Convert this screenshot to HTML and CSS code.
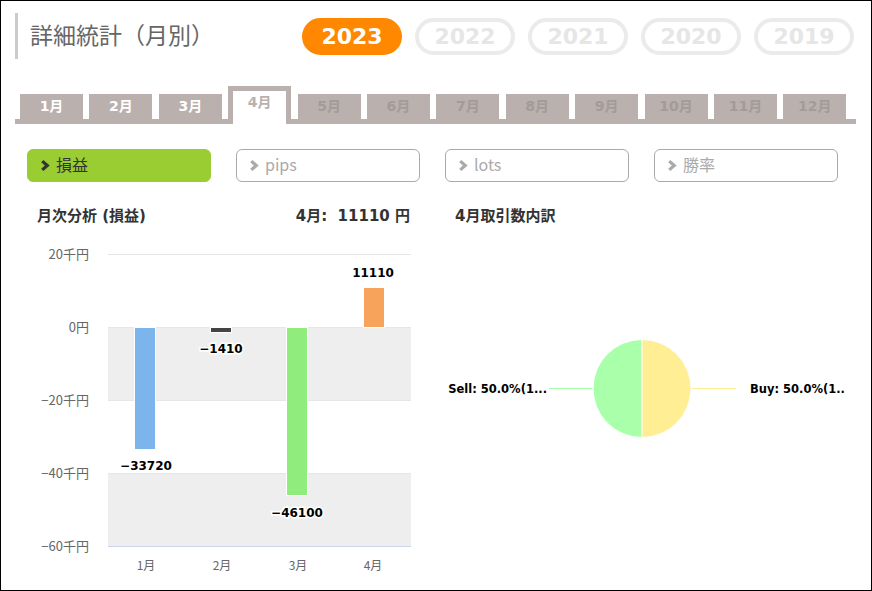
FILE: index.html
```html
<!DOCTYPE html>
<html lang="ja">
<head>
    <meta charset="UTF-8">
    <title>詳細統計（月別）</title>
    <link rel="stylesheet" href="styles.css">
</head>
<body>
<div class="page">
    <div class="header">
        <h1 class="title">詳細統計（月別）</h1>
        <div class="years">
            <span class="year active">2023</span>
            <span class="year">2022</span>
            <span class="year">2021</span>
            <span class="year">2020</span>
            <span class="year">2019</span>
        </div>
    </div>

    <ul class="months">
        <li class="done">1月</li>
        <li class="done">2月</li>
        <li class="done">3月</li>
        <li class="current">4月</li>
        <li>5月</li>
        <li>6月</li>
        <li>7月</li>
        <li>8月</li>
        <li>9月</li>
        <li>10月</li>
        <li>11月</li>
        <li>12月</li>
    </ul>

    <div class="modes">
        <div class="mode selected"><svg class="chev" viewBox="0 0 8 10"><polyline points="1.8,1.5 5.8,5 1.8,8.5"/></svg>損益</div>
        <div class="mode"><svg class="chev" viewBox="0 0 8 10"><polyline points="1.8,1.5 5.8,5 1.8,8.5"/></svg>pips</div>
        <div class="mode"><svg class="chev" viewBox="0 0 8 10"><polyline points="1.8,1.5 5.8,5 1.8,8.5"/></svg>lots</div>
        <div class="mode"><svg class="chev" viewBox="0 0 8 10"><polyline points="1.8,1.5 5.8,5 1.8,8.5"/></svg>勝率</div>
    </div>

    <div class="charts">
        <div class="panel monthly">
            <div class="panel-head">
                <span>月次分析 (損益)</span>
                <span>4月:&nbsp; 11110 円</span>
            </div>
            <svg class="plot" width="393" height="345" viewBox="0 0 393 345">
                <rect x="81" y="89" width="303" height="73" fill="#eeeeee"/>
                <rect x="81" y="235" width="303" height="73" fill="#eeeeee"/>
                <g stroke="#e6e6e6" stroke-width="1">
                    <line x1="81" y1="16.5" x2="384" y2="16.5"/>
                    <line x1="81" y1="89.5" x2="384" y2="89.5"/>
                    <line x1="81" y1="162.5" x2="384" y2="162.5"/>
                    <line x1="81" y1="235.5" x2="384" y2="235.5"/>
                </g>
                <line x1="81" y1="308.5" x2="384" y2="308.5" stroke="#ccd6eb"/>

                <g class="axis-y">
                    <text x="62" y="21">20千円</text>
                    <text x="62" y="94">0円</text>
                    <text x="62" y="167">−20千円</text>
                    <text x="62" y="240">−40千円</text>
                    <text x="62" y="313">−60千円</text>
                </g>

                <g stroke="#ffffff" stroke-width="1">
                    <rect x="107.5" y="89.5" width="21" height="122" fill="#7cb5ec"/>
                    <rect x="183.5" y="89.5" width="21" height="5" fill="#434348"/>
                    <rect x="259.5" y="89.5" width="21" height="168" fill="#90ed7d"/>
                    <rect x="336.5" y="49.5" width="21" height="40" fill="#f7a35c"/>
                </g>

                <g class="value">
                    <text x="119" y="232">−33720</text>
                    <text x="194" y="115">−1410</text>
                    <text x="270" y="279">−46100</text>
                    <text x="346" y="39">11110</text>
                </g>

                <g class="axis-x">
                    <text x="119" y="332">1月</text>
                    <text x="195" y="332">2月</text>
                    <text x="271" y="332">3月</text>
                    <text x="346" y="332">4月</text>
                </g>
            </svg>
        </div>

        <div class="panel breakdown">
            <div class="panel-head">
                <span>4月取引数内訳</span>
            </div>
            <svg class="plot" width="405" height="345" viewBox="0 0 405 345">
                <line x1="104" y1="150.5" x2="148" y2="150.5" stroke="#aaffaa"/>
                <line x1="247" y1="150.5" x2="291" y2="150.5" stroke="#ffee93"/>
                <path d="M197,101.5 A49,49 0 0 0 197,199.5 Z" fill="#aaffaa" stroke="#ffffff"/>
                <path d="M197,101.5 A49,49 0 0 1 197,199.5 Z" fill="#ffee93" stroke="#ffffff"/>
                <g class="slice">
                    <text x="102" y="155" text-anchor="end">Sell: 50.0%(1...</text>
                    <text x="305" y="155">Buy: 50.0%(1..</text>
                </g>
            </svg>
        </div>
    </div>
</div>
</body>
</html>
```

FILE: styles.css
```css
* {
    box-sizing: border-box;
}

body {
    margin: 0;
    font-family: "DejaVu Sans", "Noto Sans CJK JP", sans-serif;
    color: #333;
}

.page {
    width: 872px;
    height: 591px;
    border: 1px solid #000;
    padding: 12px 0 0 14px;
    overflow: hidden;
}

.header {
    display: flex;
    align-items: center;
    height: 46px;
}

.title {
    margin: 0;
    height: 46px;
    border-left: 3px solid #cccccc;
    padding: 6px 0 0 12px;
    font-family: "Noto Sans CJK JP", sans-serif;
    font-weight: normal;
    font-size: 23px;
    line-height: 30px;
    color: #666;
}

.years {
    display: flex;
    gap: 13px;
    margin-left: 88px;
}

.year {
    width: 100px;
    height: 37px;
    border: 4px solid #ebebeb;
    border-radius: 19px;
    text-align: center;
    font-weight: bold;
    font-size: 22px;
    line-height: 29px;
    color: #e6e6e6;
}

.year.active {
    background: #ff8800;
    border-color: #ff8800;
    color: #fff;
}

.months {
    display: flex;
    align-items: flex-end;
    gap: 6.4px;
    width: 836px;
    height: 38px;
    margin: 22px 0 0 0;
    padding: 0 0 0 5px;
    list-style: none;
    border-bottom: 5px solid #bab0ae;
    box-sizing: content-box;
}

.months li {
    width: 63px;
    height: 25px;
    background: #bab0ae;
    text-align: center;
    font-weight: bold;
    font-size: 14px;
    line-height: 25px;
    color: #a39b99;
}

.months li.done {
    color: #fff;
}

.months li.current {
    height: 38px;
    margin-bottom: -5px;
    background: #fff;
    border: 5px solid #bab0ae;
    border-bottom: 0;
    line-height: 22px;
    color: #bab0ae;
}

.modes {
    display: flex;
    gap: 25px;
    margin: 25px 0 0 12px;
}

.mode {
    display: flex;
    align-items: center;
    width: 184px;
    height: 33px;
    padding: 0 0 4px 12px;
    border: 1px solid #aaa;
    border-radius: 6px;
    font-family: "Noto Sans CJK JP", sans-serif;
    font-size: 16px;
    color: #aaa;
}

.mode.selected {
    background: #9acd32;
    border-color: #9acd32;
    color: #333;
}

.chev {
    width: 10px;
    height: 13px;
    margin: 4px 6px 0 0;
    fill: none;
    stroke: #aaa;
    stroke-width: 2.6;
}

.mode.selected .chev {
    stroke: #333;
}

.charts {
    display: flex;
    gap: 25px;
    margin: 24px 0 0 12px;
}

.panel-head {
    display: flex;
    justify-content: space-between;
    padding: 0 10px;
    height: 22px;
    font-family: "DejaVu Sans", "Noto Sans CJK JP", sans-serif;
    font-weight: bold;
    font-size: 15px;
    line-height: 20px;
    color: #333;
}

.monthly {
    width: 393px;
}

.breakdown {
    width: 405px;
}

.plot {
    display: block;
    margin-top: 10px;
}

.axis-y text {
    text-anchor: end;
    font-family: "Noto Sans CJK JP", sans-serif;
    font-size: 13px;
    fill: #666;
}

.axis-x text {
    text-anchor: middle;
    font-family: "Noto Sans CJK JP", sans-serif;
    font-size: 12px;
    fill: #666;
}

.value text {
    text-anchor: middle;
    font-family: "DejaVu Sans", sans-serif;
    font-weight: bold;
    font-size: 12px;
    fill: #000;
    stroke: #fff;
    stroke-width: 3px;
    paint-order: stroke;
}

.slice text {
    font-family: "DejaVu Sans", sans-serif;
    font-weight: bold;
    font-size: 11.5px;
    fill: #000;
}
```
